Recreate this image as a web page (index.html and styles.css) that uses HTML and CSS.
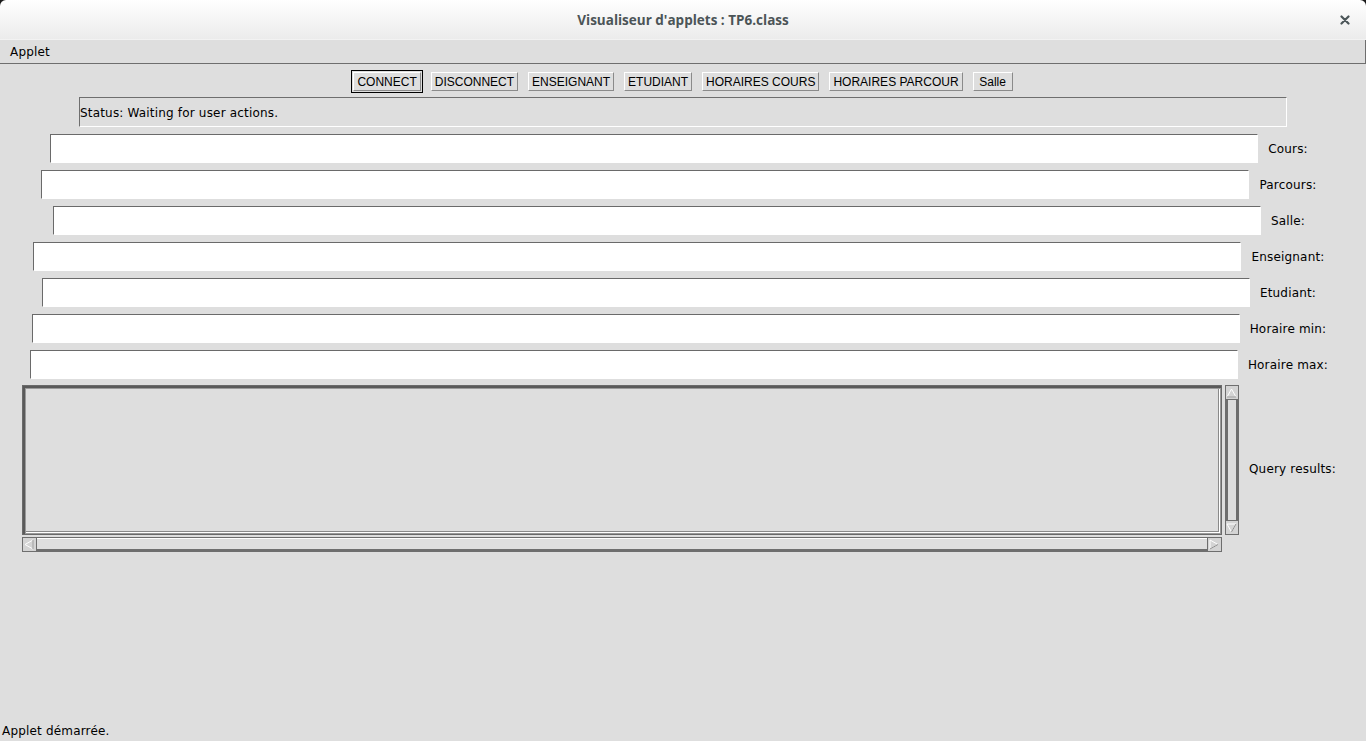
FILE: index.html
```html
<!DOCTYPE html>
<html lang="fr">
<head>
<meta charset="utf-8">
<title>Visualiseur d'applets : TP6.class</title>
<link rel="stylesheet" href="styles.css">
</head>
<body>
<div class="window">
  <header class="titlebar">
    <span class="spacer"></span>
    <h1 class="title">Visualiseur d'applets : TP6.class</h1>
    <button class="close" aria-label="Fermer">
      <svg width="10" height="10" viewBox="0 0 10 10"><path d="M1.5 1.5 L8.5 8.5 M8.5 1.5 L1.5 8.5" stroke="#4c5659" stroke-width="2.2" stroke-linecap="round"/></svg>
    </button>
  </header>
  <nav class="menubar"><span class="menu">Applet</span></nav>
  <main class="applet">
    <div class="buttons">
      <button class="btn focused">CONNECT</button>
      <button class="btn">DISCONNECT</button>
      <button class="btn">ENSEIGNANT</button>
      <button class="btn">ETUDIANT</button>
      <button class="btn">HORAIRES COURS</button>
      <button class="btn">HORAIRES PARCOUR</button>
      <button class="btn">Salle</button>
    </div>
    <div class="status">Status: Waiting for user actions.</div>
    <div class="rows">
      <div class="row"><div class="field"></div><span class="lbl">Cours:</span></div>
      <div class="row"><div class="field"></div><span class="lbl">Parcours:</span></div>
      <div class="row"><div class="field"></div><span class="lbl">Salle:</span></div>
      <div class="row"><div class="field"></div><span class="lbl">Enseignant:</span></div>
      <div class="row"><div class="field"></div><span class="lbl">Etudiant:</span></div>
      <div class="row"><div class="field"></div><span class="lbl">Horaire min:</span></div>
      <div class="row"><div class="field"></div><span class="lbl">Horaire max:</span></div>
      <div class="row">
        <div class="scrollpane">
          <div class="textarea"></div>
          <div class="vscroll">
            <div class="arrow"><svg width="11" height="10" viewBox="0 0 11 10"><path d="M5.5 1 L10 9 L1 9 Z" fill="none" stroke="#ffffff" stroke-width="1"/><path d="M10 9 L1 9" stroke="#8a8a8a" stroke-width="1"/></svg></div>
            <div class="track"></div>
            <div class="arrow"><svg width="11" height="10" viewBox="0 0 11 10"><path d="M1 1 L10 1 L5.5 9 Z" fill="none" stroke="#ffffff" stroke-width="1"/><path d="M10 1 L5.5 9" stroke="#8a8a8a" stroke-width="1"/></svg></div>
          </div>
          <div class="hscroll">
            <div class="arrow"><svg width="10" height="11" viewBox="0 0 10 11"><path d="M1 5.5 L9 1 L9 10 Z" fill="none" stroke="#ffffff" stroke-width="1"/><path d="M9 1 L9 10" stroke="#8a8a8a" stroke-width="1"/></svg></div>
            <div class="track"></div>
            <div class="arrow"><svg width="10" height="11" viewBox="0 0 10 11"><path d="M1 1 L9 5.5 L1 10 Z" fill="none" stroke="#ffffff" stroke-width="1"/><path d="M9 5.5 L1 10" stroke="#8a8a8a" stroke-width="1"/></svg></div>
          </div>
        </div>
        <span class="lbl">Query results:</span>
      </div>
    </div>
  </main>
  <footer class="statusbar">Applet démarrée.</footer>
</div>
</body>
</html>
```
FILE: styles.css
```css
html {
  background: #1a1a1a;
}
body {
  margin: 0;
  font-family: "DejaVu Sans", sans-serif;
  font-size: 12px;
  letter-spacing: 0.18px;
  color: #000;
}
.window {
  height: 100vh;
  display: flex;
  flex-direction: column;
}
.titlebar {
  height: 40px;
  flex: none;
  box-sizing: border-box;
  display: grid;
  grid-template-columns: 1fr auto 1fr;
  align-items: center;
  background: linear-gradient(#ffffff, #ebebeb);
  border-bottom: 1px solid #f2f2f2;
  border-radius: 6px 6px 0 0;
}
.title {
  margin: 0;
  font-family: "Open Sans", sans-serif;
  font-weight: 700;
  font-size: 13.5px;
  letter-spacing: 0;
  color: #4b5457;
  text-align: center;
}
.close {
  justify-self: end;
  margin-right: 16px;
  padding: 0;
  border: 0;
  background: none;
  display: flex;
}
.menubar {
  height: 24px;
  flex: none;
  box-sizing: border-box;
  background: #dedede;
  border-bottom: 1px solid #6e6e6e;
  border-right: 1px solid #6e6e6e;
  padding-left: 10px;
  display: flex;
  align-items: center;
}
.applet {
  flex: 1;
  background: #dedede;
  display: flex;
  flex-direction: column;
  align-items: center;
  padding-top: 8px;
}
.buttons {
  display: flex;
  gap: 10px;
}
.btn {
  height: 19px;
  min-width: 40px;
  box-sizing: border-box;
  padding: 0 3px;
  font-family: "Liberation Sans", sans-serif;
  font-size: 12px;
  letter-spacing: 0;
  color: #000;
  background: #dedede;
  border: 1px solid;
  border-color: #ffffff #8a8a8a #8a8a8a #ffffff;
  line-height: 16px;
}
.btn.focused {
  outline: 1px solid #000;
  outline-offset: 1px;
}
.status {
  width: 1208px;
  height: 30px;
  box-sizing: border-box;
  margin-top: 6px;
  border: 1px solid;
  border-color: #6e6e6e #ffffff #ffffff #6e6e6e;
  display: flex;
  align-items: center;
  padding-top: 1px;
}
.rows {
  align-self: stretch;
  padding-right: 8px;
  margin-top: 7px;
  display: flex;
  flex-direction: column;
  gap: 7px;
}
.row {
  display: flex;
  justify-content: center;
  align-items: center;
  gap: 10px;
}
.field {
  width: 1208px;
  height: 29px;
  box-sizing: border-box;
  background: #fff;
  border: 1px solid;
  border-color: #6a6a6a #ffffff #ffffff #6a6a6a;
}
.lbl {
  white-space: nowrap;
}
.scrollpane {
  display: grid;
  grid-template-columns: 1200px 14px;
  grid-template-rows: 150px 15px;
  column-gap: 3px;
  row-gap: 2px;
  margin-top: -1px;
}
.textarea {
  box-sizing: border-box;
  background: #dedede;
  border: 1px solid #6a6a6a;
  box-shadow: inset 2px 2px 0 #5a5a5a, inset 3px 3px 0 #9a9a9a, inset -1px -1px 0 #9a9a9a, inset -2px -2px 0 #ffffff, inset -3px -3px 0 #8a8a8a;
}
.vscroll {
  box-sizing: border-box;
  border: 1px solid #6e6e6e;
  display: flex;
  flex-direction: column;
  background: #dedede;
}
.hscroll {
  box-sizing: border-box;
  border: 1px solid #6e6e6e;
  display: flex;
  background: #dedede;
}
.vscroll .arrow {
  height: 13px;
  flex: none;
  display: flex;
  align-items: center;
  justify-content: center;
  background: #d4d4d4;
  border-bottom: 1px solid #6e6e6e;
}
.vscroll .arrow:last-child {
  border-bottom: 0;
  border-top: 1px solid #6e6e6e;
}
.vscroll .track {
  flex: 1;
  border-left: 2px solid #6e6e6e;
  border-right: 2px solid #6e6e6e;
}
.hscroll .arrow {
  width: 13px;
  flex: none;
  display: flex;
  align-items: center;
  justify-content: center;
  background: #d4d4d4;
  border-right: 1px solid #6e6e6e;
}
.hscroll .arrow:last-child {
  border-right: 0;
  border-left: 1px solid #6e6e6e;
}
.hscroll .track {
  flex: 1;
  border-top: 1px solid #ffffff;
  border-bottom: 2px solid #6e6e6e;
}
.statusbar {
  flex: none;
  height: 21px;
  background: #dedede;
  padding-left: 2px;
  display: flex;
  align-items: center;
}
```
